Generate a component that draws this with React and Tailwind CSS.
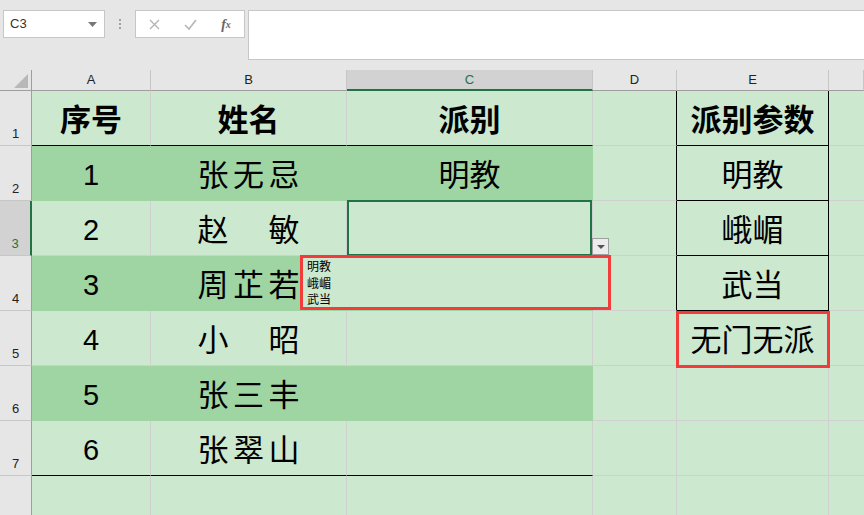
const ROWS = [
  { n: 1, a: '序号', b: ['姓名'], c: '派别', e: '派别参数', head: true },
  { n: 2, a: '1', b: ['张', '无', '忌'], c: '明教', e: '明教', dark: true },
  { n: 3, a: '2', b: ['赵', '敏'], c: '', e: '峨嵋', selected: true },
  { n: 4, a: '3', b: ['周', '芷', '若'], c: '', e: '武当', dark: true },
  { n: 5, a: '4', b: ['小', '昭'], c: '', e: '无门无派', red: true },
  { n: 6, a: '5', b: ['张', '三', '丰'], c: '', e: '', dark: true },
  { n: 7, a: '6', b: ['张', '翠', '山'], c: '', e: '', last: true },
];

const COLS = ['A', 'B', 'C', 'D', 'E', ''];

function TableCell({ row, children, extra = '' }) {
  let cls = 'bg-[#cce8cf] border-r border-b border-r-[#d0d0d0] border-b-[#d0d0d0]';
  if (row.dark) cls = 'bg-[#9fd4a3] border-r border-b border-r-[#9fd4a3] border-b-[#9fd4a3]';
  if (row.head || row.last) cls = 'bg-[#cce8cf] border-r border-b border-r-[#d0d0d0] border-b-black';
  return (
    <div className={`flex items-center justify-center pt-[5px] ${cls} ${extra}`}>{children}</div>
  );
}

function Toolbar() {
  return (
    <div className="flex h-[70px] items-start pt-[10px]">
      <div className="ml-[3px] flex h-[28px] w-[102px] items-center justify-between border border-[#c6c6c6] bg-white pl-[6px] pr-[7px] text-[13px] text-[#333]">
        <span>C3</span>
        <svg width="9" height="5" viewBox="0 0 9 5">
          <path d="M0 0h9L4.5 5z" fill="#777" />
        </svg>
      </div>
      <div className="flex h-[28px] w-[30px] flex-col items-center justify-center gap-[2px]">
        <span className="h-[2px] w-[2px] bg-[#a0a0a0]" />
        <span className="h-[2px] w-[2px] bg-[#a0a0a0]" />
        <span className="h-[2px] w-[2px] bg-[#a0a0a0]" />
      </div>
      <div className="flex h-[28px] w-[110px] items-center border border-[#c6c6c6] bg-white">
        <div className="flex w-[36px] justify-center">
          <svg width="11" height="11" viewBox="0 0 11 11">
            <path d="M1 1l9 9M10 1l-9 9" stroke="#b5b5b5" strokeWidth="1.4" />
          </svg>
        </div>
        <div className="flex w-[36px] justify-center">
          <svg width="13" height="11" viewBox="0 0 13 11">
            <path d="M1 6l4 4 7-9" stroke="#b5b5b5" strokeWidth="1.6" fill="none" />
          </svg>
        </div>
        <div className="flex w-[36px] justify-center font-['Liberation_Serif',serif] text-[14px] font-bold italic text-[#666]">
          f<span className="mt-[3px] text-[10px]">x</span>
        </div>
      </div>
      <div className="ml-[3px] h-[50px] flex-1 border border-r-0 border-[#c6c6c6] bg-white" />
    </div>
  );
}

export default function App() {
  return (
    <div className="h-[515px] w-[864px] overflow-hidden bg-[#e6e6e6] font-['Liberation_Sans','Noto_Sans_CJK_SC',sans-serif] text-black">
      <Toolbar />
      <div className="grid grid-cols-[32px_119px_196px_246px_84px_152px_35px] grid-rows-[21px_repeat(7,55px)_39px]">
        {/* column headers */}
        <div className="relative border-r border-b border-r-[#9e9e9e] border-b-[#9e9e9e] bg-[#e6e6e6]">
          <svg className="absolute right-[3px] bottom-[2px]" width="14" height="14" viewBox="0 0 14 14">
            <path d="M14 0V14H0z" fill="#b8b8b8" />
          </svg>
        </div>
        {COLS.map((c) =>
          c === 'C' ? (
            <div key={c} className="flex items-center justify-center border-r border-b-2 border-r-[#c6c6c6] border-b-[#217346] bg-[#d2d2d2] text-[13px] text-[#217346]">
              {c}
            </div>
          ) : (
            <div key={c || 'F'} className="flex items-center justify-center border-r border-b border-r-[#c6c6c6] border-b-[#9e9e9e] bg-[#e6e6e6] text-[13px] text-[#222]">
              {c}
            </div>
          )
        )}

        {ROWS.map((row) => (
          <RowCells key={row.n} row={row} />
        ))}

        {/* row 8, its number sits below the window */}
        <div className="border-r border-r-[#9e9e9e] bg-[#e6e6e6]" />
        <div className="border-r border-r-[#d0d0d0] bg-[#cce8cf]" />
        <div className="border-r border-r-[#d0d0d0] bg-[#cce8cf]" />
        <div className="border-r border-r-[#d0d0d0] bg-[#cce8cf]" />
        <div className="border-r border-r-[#d0d0d0] bg-[#cce8cf]" />
        <div className="border-r border-r-[#d0d0d0] bg-[#cce8cf]" />
        <div className="bg-[#cce8cf]" />
      </div>
    </div>
  );
}

function RowCells({ row }) {
  const cjk = 'text-[31px] leading-none';
  const num = 'text-[29px] leading-none';
  const weight = row.head ? 'font-bold' : 'font-normal';
  const upper = row.n <= 4;
  return (
    <>
      {row.selected ? (
        <div className="flex items-end justify-center border-r-2 border-b border-r-[#217346] border-b-[#c6c6c6] bg-[#d2d2d2] pb-[2px] text-[13px] text-[#217346]">
          {row.n}
        </div>
      ) : (
        <div className="flex items-end justify-center border-r border-b border-r-[#9e9e9e] border-b-[#c6c6c6] bg-[#e6e6e6] pb-[2px] text-[13px] text-[#222]">
          {row.n}
        </div>
      )}

      <TableCell row={row}>
        <span className={`${row.head ? cjk : num} ${weight}`}>{row.a}</span>
      </TableCell>

      <TableCell row={row}>
        {row.b.length === 1 ? (
          <span className={`${cjk} ${weight}`}>{row.b[0]}</span>
        ) : (
          <div className={`flex w-[102px] justify-between ${cjk}`}>
            {row.b.map((ch, i) => (
              <span key={i}>{ch}</span>
            ))}
          </div>
        )}
      </TableCell>

      <TableCell row={row} extra={row.selected ? 'relative' : ''}>
        <span className={`${cjk} ${weight}`}>{row.c}</span>
        {row.selected && (
          <>
            <div className="absolute inset-0 -top-px -bottom-px border-2 border-[#217346]" />
            <div className="absolute top-[37px] left-full flex h-[17px] w-[17px] items-center justify-center border border-[#a0a0a0] bg-[#ececec]">
              <svg width="8" height="4" viewBox="0 0 8 4">
                <path d="M0 0h8L4 4z" fill="#555" />
              </svg>
            </div>
            <div className="absolute top-[54px] left-[-47px] z-10 h-[55px] w-[311px] border-[3px] border-[#f23c3c] bg-[#cce8cf] pl-[4px] font-['Noto_Sans_CJK_SC',sans-serif] text-[12px] leading-[16.5px]">
              <div>明教</div>
              <div>峨嵋</div>
              <div>武当</div>
            </div>
          </>
        )}
      </TableCell>

      <div
        className={`border-b border-r bg-[#cce8cf] border-b-[#d0d0d0] ${upper ? 'border-r-black' : 'border-r-[#d0d0d0]'}`}
      />

      <div
        className={`relative flex items-center justify-center border-r border-b bg-[#cce8cf] pt-[5px] ${
          upper ? 'border-r-black border-b-black' : 'border-r-[#d0d0d0] border-b-[#d0d0d0]'
        }`}
      >
        <span className={`${cjk} ${weight}`}>{row.e}</span>
        {row.red && <div className="absolute top-0 -left-px right-[-2px] bottom-[-3px] z-10 border-[3px] border-[#f23c3c]" />}
      </div>

      <div className="border-b border-b-[#d0d0d0] bg-[#cce8cf]" />
    </>
  );
}
